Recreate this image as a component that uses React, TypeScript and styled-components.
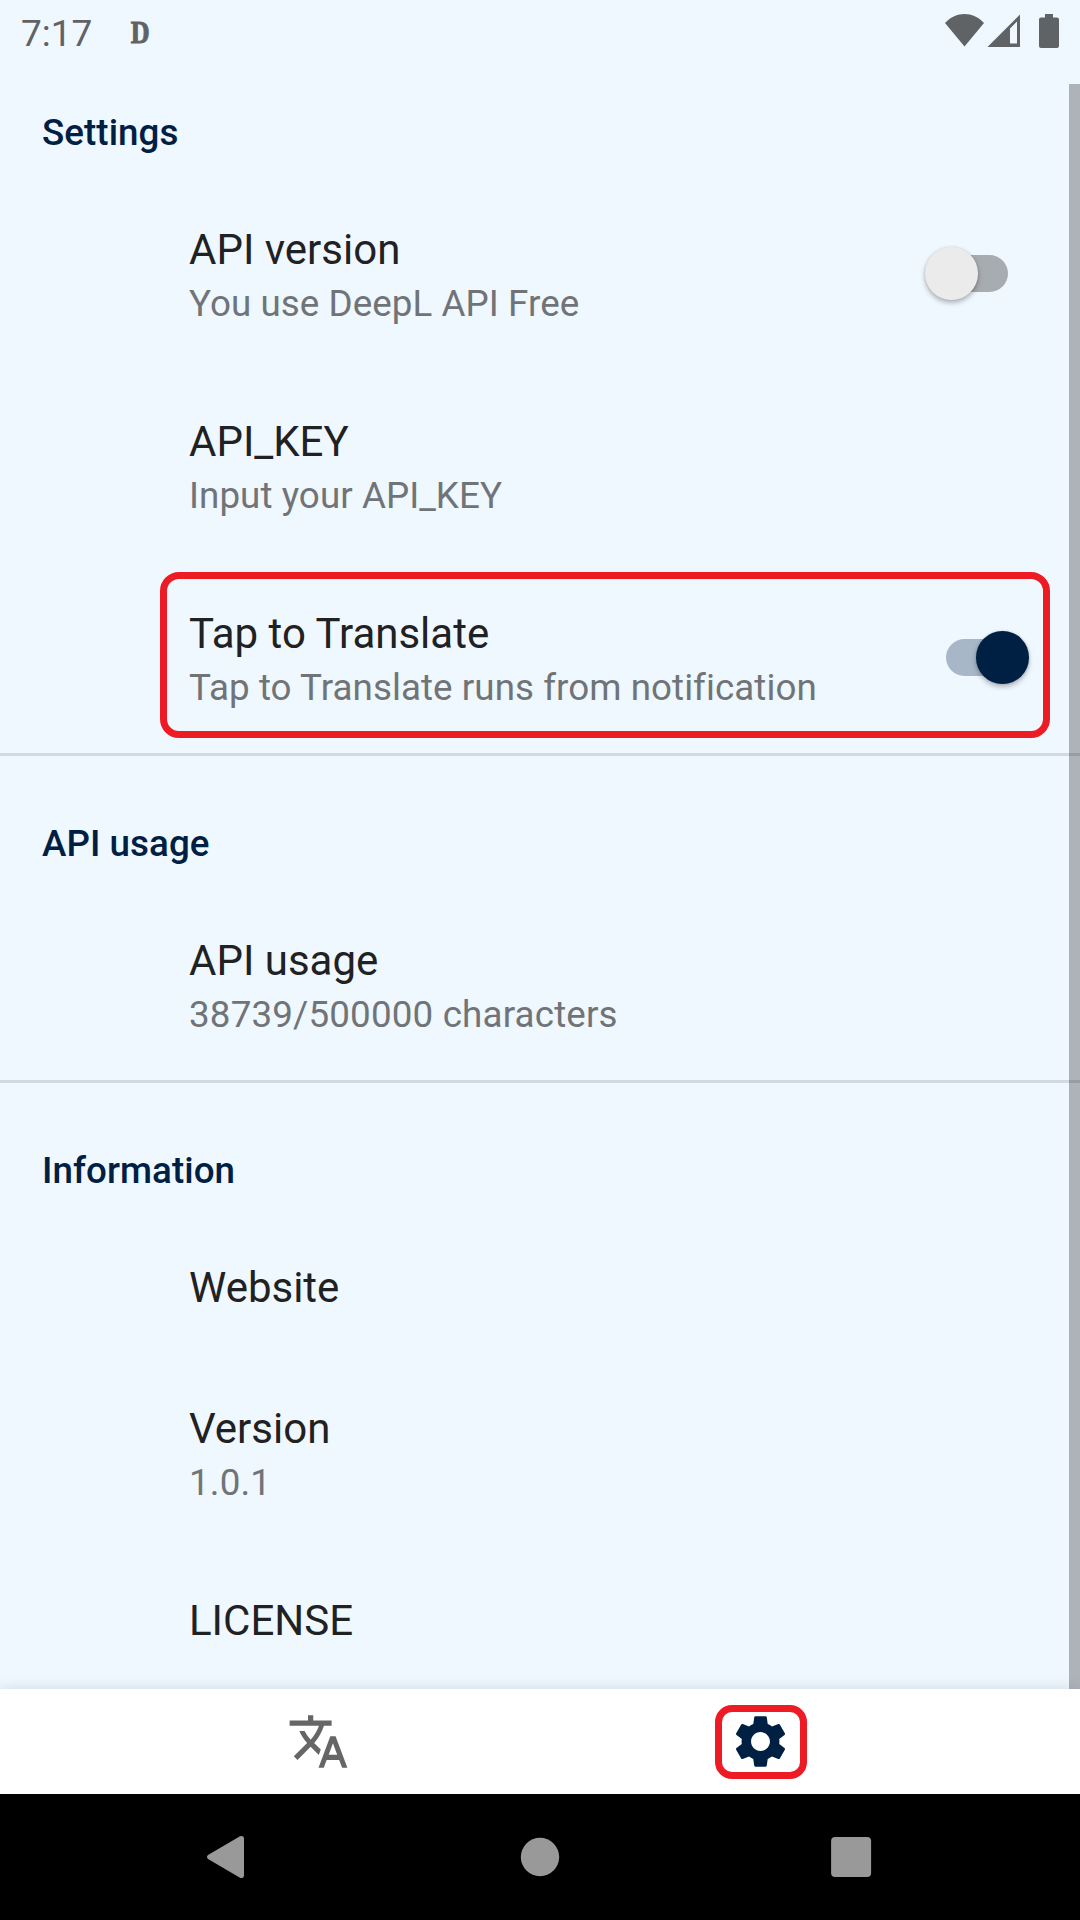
import React from "react";
import styled, { createGlobalStyle } from "styled-components";

const GlobalStyle = createGlobalStyle`
  * { box-sizing: border-box; }
  body { margin: 0; background: #eff7ff; }
`;

const Screen = styled.div`
  display: flex;
  flex-direction: column;
  width: 1080px;
  height: 1920px;
  overflow: hidden;
  background: #eff7ff;
  font-family: Roboto, "Liberation Sans", sans-serif;
`;

const StatusBar = styled.header`
  display: flex;
  flex: none;
  align-items: flex-start;
  height: 84px;
  padding: 0 21px;
  color: #5f6366;
`;

const Clock = styled.span`
  width: 108px;
  padding-top: 12px;
  font-size: 37px;
  line-height: 44px;
`;

const NotificationMark = styled.span`
  margin-top: 15px;
  font-family: "Liberation Serif", serif;
  font-weight: 700;
  font-size: 31px;
  line-height: 35px;
  transform: scaleX(0.84);
  -webkit-text-stroke: 1px #5f6366;
`;

const StatusIcons = styled.div`
  display: flex;
  margin-left: auto;
  padding-top: 14px;
`;

const StatusIcon = styled.svg<{ $gap?: number }>`
  display: block;
  flex: none;
  margin-left: ${(p) => p.$gap ?? 0}px;
  fill: currentColor;
`;

const Content = styled.main`
  position: relative;
  flex: 1;
  min-height: 0;
  overflow: hidden;
`;

const Scrollbar = styled.div`
  position: absolute;
  top: 0;
  right: 0;
  width: 11px;
  height: 100%;
  background: rgba(0, 0, 0, 0.275);
`;

const Section = styled.section`
  & + & {
    padding-top: 39px;
  }
  &:not(:last-of-type) {
    border-bottom: 3px solid #d1d9e1;
  }
`;

const SectionTitle = styled.h2`
  height: 96px;
  margin: 0;
  padding: 27px 42px 0;
  color: #002043;
  font-size: 36.75px;
  font-weight: 500;
  line-height: 44px;
  letter-spacing: 0.06px;
`;

const Row = styled.div<{ $last?: boolean }>`
  position: relative;
  display: flex;
  justify-content: space-between;
  min-height: 141px;
  padding: 43px 51px ${(p) => (p.$last ? 38 : 41)}px 189px;
`;

const RowTitle = styled.div`
  color: #1f2122;
  font-size: 42px;
  line-height: 54px;
  white-space: nowrap;
`;

const RowSummary = styled.div<{ $numeric: boolean }>`
  color: #707477;
  font-size: 36.75px;
  line-height: 54px;
  letter-spacing: ${(p) => (p.$numeric ? 0.17 : 0.06)}px;
  white-space: nowrap;
`;

const Track = styled.div<{ $on: boolean }>`
  display: flex;
  align-items: center;
  align-self: flex-start;
  justify-content: ${(p) => (p.$on ? "flex-end" : "flex-start")};
  width: 62px;
  height: 37px;
  margin: 32px 21px 0 0;
  border-radius: 19px;
  background: ${(p) => (p.$on ? "#a7b7c8" : "#a7acb0")};
`;

const Thumb = styled.div<{ $on: boolean }>`
  flex: none;
  width: 52.5px;
  height: 52.5px;
  margin: 0 -20.6px;
  border-radius: 50%;
  background: ${(p) => (p.$on ? "#002043" : "#ebebeb")};
  box-shadow: 0 3px 5px rgba(0, 0, 0, 0.26), 0 0 3px rgba(0, 0, 0, 0.12);
`;

const RowHighlight = styled.div`
  position: absolute;
  top: 8px;
  left: 160px;
  width: 890px;
  height: 166px;
  border: 7px solid #ed1c24;
  border-radius: 19px;
`;

const TabBar = styled.nav`
  position: relative;
  display: flex;
  flex: none;
  justify-content: center;
  height: 105px;
  background: #fff;
  box-shadow: 0 0 14px rgba(0, 0, 0, 0.13);
`;

const Tab = styled.div<{ $active?: boolean }>`
  display: flex;
  align-items: center;
  justify-content: center;
  width: 441px;
  padding-right: ${(p) => (p.$active ? 0 : 2)}px;
  color: ${(p) => (p.$active ? "#002043" : "#666")};
`;

const TabIcon = styled.svg`
  display: block;
  flex: none;
  width: 63px;
  height: 63px;
  fill: currentColor;
`;

const TabHighlight = styled.div`
  display: flex;
  align-items: center;
  justify-content: center;
  width: 92px;
  height: 74px;
  margin-top: 1px;
  padding-bottom: 1px;
  border: 7px solid #ed1c24;
  border-radius: 17px;
`;

const SystemBar = styled.footer`
  display: flex;
  flex: none;
  justify-content: center;
  align-items: center;
  gap: 272px;
  height: 126px;
  background: #000;
`;

const SystemIcon = styled.svg`
  display: block;
  flex: none;
  width: 42px;
  height: 44px;
  overflow: visible;
  fill: #999;
`;

type Item = { title: string; summary?: string; on?: boolean; marked?: boolean };

const sections: { title: string; items: Item[] }[] = [
  {
    title: "Settings",
    items: [
      { title: "API version", summary: "You use DeepL API Free", on: false },
      { title: "API_KEY", summary: "Input your API_KEY" },
      {
        title: "Tap to Translate",
        summary: "Tap to Translate runs from notification",
        on: true,
        marked: true,
      },
    ],
  },
  {
    title: "API usage",
    items: [{ title: "API usage", summary: "38739/500000 characters" }],
  },
  {
    title: "Information",
    items: [
      { title: "Website" },
      { title: "Version", summary: "1.0.1" },
      { title: "LICENSE" },
    ],
  },
];

function Switch({ on }: { on: boolean }) {
  return (
    <Track $on={on} role="switch" aria-checked={on}>
      <Thumb $on={on} />
    </Track>
  );
}

export default function App() {
  return (
    <>
      <GlobalStyle />
      <Screen>
        <StatusBar>
          <Clock>7:17</Clock>
          <NotificationMark>D</NotificationMark>
          <StatusIcons>
            <StatusIcon width="39" height="34" viewBox="0 0 39 34">
              <path d="M0 9C11-3 28-3 39 9L19.5 32.5z" />
            </StatusIcon>
            <StatusIcon $gap={3} width="34" height="34" viewBox="0 0 34 34">
              <path
                fillRule="evenodd"
                d="M0.5 33L33 0.5V33zM23 14.5V29.5H30V7.5z"
              />
            </StatusIcon>
            <StatusIcon $gap={18} width="20" height="34" viewBox="0 0 20 34">
              <path d="M6 0H14V3.5H18Q20 3.5 20 5.5V32Q20 34 18 34H2Q0 34 0 32V5.5Q0 3.5 2 3.5H6z" />
            </StatusIcon>
          </StatusIcons>
        </StatusBar>

        <Content>
          {sections.map((section, s) => (
            <Section key={section.title}>
              <SectionTitle>{section.title}</SectionTitle>
              {section.items.map((item, i) => (
                <Row
                  key={item.title}
                  $last={
                    s < sections.length - 1 && i === section.items.length - 1
                  }
                >
                  <div>
                    <RowTitle>{item.title}</RowTitle>
                    {item.summary && (
                      <RowSummary $numeric={/^\d/.test(item.summary)}>
                        {item.summary}
                      </RowSummary>
                    )}
                  </div>
                  {item.on !== undefined && <Switch on={item.on} />}
                  {item.marked && <RowHighlight />}
                </Row>
              ))}
            </Section>
          ))}
          <Scrollbar />
        </Content>

        <TabBar>
          <Tab>
            <TabIcon viewBox="0 0 24 24">
              <path d="M12.87 15.07l-2.54-2.51.03-.03c1.74-1.94 2.98-4.17 3.71-6.53H17V4h-7V2H8v2H1v1.99h11.17C11.5 7.92 10.44 9.75 9 11.35 8.07 10.32 7.3 9.19 6.69 8h-2c.73 1.63 1.73 3.17 2.98 4.56l-5.09 5.02L4 19l5-5 3.11 3.11.76-2.04zM18.5 10h-2L12 22h2l1.12-3h4.75L21 22h2l-4.5-12zm-2.62 7l1.62-4.33L19.12 17h-3.24z" />
            </TabIcon>
          </Tab>
          <Tab $active>
            <TabHighlight>
              <TabIcon viewBox="0 0 24 24">
                <path d="M19.14 12.94c.04-.3.06-.61.06-.94 0-.32-.02-.64-.07-.94l2.03-1.58c.18-.14.23-.41.12-.61l-1.92-3.32c-.12-.22-.37-.29-.59-.22l-2.39.96c-.5-.38-1.03-.7-1.62-.94L14.4 2.81c-.04-.24-.24-.41-.48-.41h-3.84c-.24 0-.43.17-.47.41L9.25 5.35C8.66 5.59 8.12 5.92 7.63 6.29L5.24 5.33c-.22-.08-.47 0-.59.22L2.74 8.87c-.12.21-.08.47.12.61l2.03 1.58c-.05.3-.09.63-.09.94s.02.64.07.94l-2.03 1.58c-.18.14-.23.41-.12.61l1.92 3.32c.12.22.37.29.59.22l2.39-.96c.5.38 1.03.7 1.62.94l.36 2.54c.05.24.24.41.48.41h3.84c.24 0 .44-.17.47-.41l.36-2.54c.59-.24 1.13-.56 1.62-.94l2.39.96c.22.08.47 0 .59-.22l1.92-3.32c.12-.22.07-.47-.12-.61l-2.01-1.58zM12 15.6c-1.98 0-3.6-1.62-3.6-3.6s1.62-3.6 3.6-3.6 3.6 1.62 3.6 3.6-1.62 3.6-3.6 3.6z" />
              </TabIcon>
            </TabHighlight>
          </Tab>
        </TabBar>

        <SystemBar>
          <SystemIcon viewBox="0 0 42 44">
            <path d="M3 20Q1 22 3 24L35 42.7Q39 44 39 40.5V3.5Q39 0 35 1.300z" />
          </SystemIcon>
          <SystemIcon viewBox="0 0 42 44">
            <circle cx="21" cy="22" r="19.2" />
          </SystemIcon>
          <SystemIcon viewBox="0 0 42 44">
            <rect x="-1.9" y="2" width="40" height="40" rx="4" />
          </SystemIcon>
        </SystemBar>
      </Screen>
    </>
  );
}
